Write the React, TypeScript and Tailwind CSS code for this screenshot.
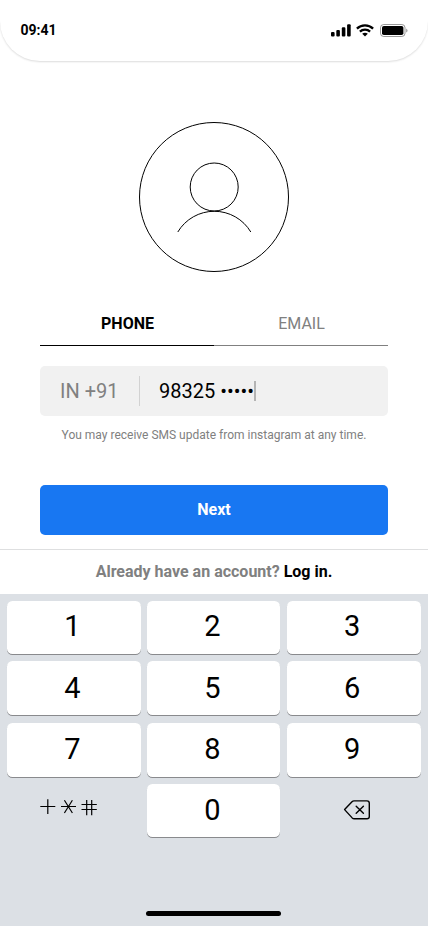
import React from 'react';

function Signal() {
  return (
    <svg width="20" height="13" viewBox="0 0 20 13" fill="#000">
      <rect x="0" y="8" width="3.6" height="4.5" rx="1.1" />
      <rect x="5.3" y="6" width="3.6" height="6.5" rx="1.1" />
      <rect x="10.8" y="3.3" width="3.6" height="9.2" rx="1.1" />
      <rect x="16.1" y="0.2" width="3.6" height="12.3" rx="1.1" />
    </svg>
  );
}

function Wifi() {
  return (
    <svg width="18" height="13" viewBox="0 0 18 13" fill="none" stroke="#000" strokeWidth="2.3">
      <path d="M0.9 4.6 C5.3 0.3 12.7 0.3 17.1 4.6" />
      <path d="M3.9 7.7 C6.7 5 11.3 5 14.1 7.7" />
      <path d="M9 12.4 L6.2 9.7 C7.7 8.4 10.3 8.4 11.8 9.7 Z" fill="#000" stroke="none" />
    </svg>
  );
}

function Battery() {
  return (
    <svg width="28" height="13" viewBox="0 0 28 13">
      <rect x="0.5" y="0.5" width="24.5" height="12" rx="3.2" fill="none" stroke="#000" strokeOpacity="0.4" />
      <rect x="2" y="2" width="21.4" height="9" rx="1.8" fill="#000" />
      <path d="M26.2 4.4 C28 5.2 28 7.8 26.2 8.6 Z" fill="#000" fillOpacity="0.4" />
    </svg>
  );
}

function Avatar() {
  return (
    <svg className="mx-auto mt-[61px] block" width="150" height="150" viewBox="0 0 150 150" fill="none" stroke="#000">
      <circle cx="75" cy="75" r="74.5" />
      <circle cx="75.2" cy="65" r="24" />
      <path d="M38.8 110 A42.5 42.5 0 0 1 111.8 110" />
    </svg>
  );
}

function Symbols() {
  return (
    <svg width="58" height="18" viewBox="0 0 58 18" fill="none" stroke="#000" strokeWidth="1.2">
      <path d="M0.3 8.5 H15.3 M7.8 1.2 V16" />
      <path d="M21 8.5 H36 M24.4 2.2 L32.4 15 M32.4 2.2 L24.4 15" />
      <path d="M41.5 6.5 H56.8 M41.5 11.5 H56.8 M46.7 2 V17.2 M51.7 2 V17.2" />
    </svg>
  );
}

function Backspace() {
  return (
    <svg width="28" height="20" viewBox="0 0 28 20" fill="none" stroke="#000" strokeWidth="1.4" strokeLinejoin="round" strokeLinecap="round">
      <path d="M1.6 9.6 L9 1.8 C9.6 1.2 10 0.9 11 0.9 H24 Q26.3 0.9 26.3 3.2 V16.5 Q26.3 18.8 24 18.8 H11.2 C10.2 18.8 9.8 18.5 9.2 17.9 Z" />
      <path d="M13.2 6.3 L20.4 13.2 M20.4 6.3 L13.2 13.2" />
    </svg>
  );
}

function Key({ label, className }: { label: string; className: string }) {
  return (
    <button
      className={
        'flex items-center justify-center rounded-[5.5px] bg-white pr-[3px] text-[29px] leading-none shadow-[0_1px_0_#898a8d] ' +
        className
      }
    >
      {label}
    </button>
  );
}

export default function App() {
  return (
    <div className="flex h-[926px] w-[428px] flex-col overflow-hidden bg-white font-['Roboto',sans-serif] text-black">
      <header className="flex h-[61px] shrink-0 items-start justify-between rounded-b-[40px] pl-[20.5px] pr-[20px] pt-[24px] shadow-[0_1px_2px_rgba(0,0,0,0.14)]">
        <span className="text-[14px] font-bold leading-[13px]">09:41</span>
        <div className="flex">
          <Signal />
          <span className="ml-[5px]"><Wifi /></span>
          <span className="ml-[6px]"><Battery /></span>
        </div>
      </header>

      <main className="h-[488px] shrink-0 px-[40px]">
        <Avatar />
        <nav className="mt-[29px] flex h-[45px] text-center text-[16px] leading-[45px]">
          <div className="flex-1 border-b border-black pl-[1px] font-bold">PHONE</div>
          <div className="flex-1 border-b border-[#808080] pl-[1px] text-[#808080]">EMAIL</div>
        </nav>
        <div className="mt-[20px] flex h-[50px] items-center rounded-[5px] bg-[#f1f1f1] text-[20px]">
          <span className="w-[99px] pl-[20px] text-[#808080]">IN +91</span>
          <span className="h-[30px] w-px bg-[#d2d2d2]" />
          <span className="ml-[19px] whitespace-pre">98325 •••••</span>
          <span className="h-[20px] w-[2px] bg-[#b4b4b4]" />
        </div>
        <p className="mt-[11px] text-center text-[12px] leading-4 text-[#808080]">
          You may receive SMS update from instagram at any time.
        </p>
        <button className="mt-[42px] h-[50px] w-full rounded-[5px] bg-[#1877f2] text-[16px] font-bold text-white">Next</button>
      </main>

      <div className="h-[45px] shrink-0 border-t border-[#dedfe0] text-center text-[16px] font-bold leading-[44px]">
        <span className="text-[#808080]">Already have an account?</span> Log in.
      </div>

      <section className="flex flex-1 flex-col bg-[#dce0e5] px-[7px] pt-[7px]">
        <div className="grid grid-cols-[134px_133px_134px] gap-x-[6.3px] gap-y-[7.4px]">
          <Key label="1" className="h-[53px] pb-[2px]" />
          <Key label="2" className="h-[53px] pb-[2px]" />
          <Key label="3" className="h-[53px] pb-[2px]" />
          <Key label="4" className="h-[54px]" />
          <Key label="5" className="h-[54px]" />
          <Key label="6" className="h-[54px]" />
          <Key label="7" className="h-[54px] pb-[1px]" />
          <Key label="8" className="h-[54px] pb-[1px]" />
          <Key label="9" className="h-[54px] pb-[1px]" />
          <div className="pl-[32.5px] pt-[14px]"><Symbols /></div>
          <Key label="0" className="h-[53px]" />
          <div className="pl-[56.5px] pt-[15.5px]"><Backspace /></div>
        </div>
        <div className="mb-[10px] ml-[139px] mt-auto h-[5px] w-[135px] rounded-full bg-black" />
      </section>
    </div>
  );
}
